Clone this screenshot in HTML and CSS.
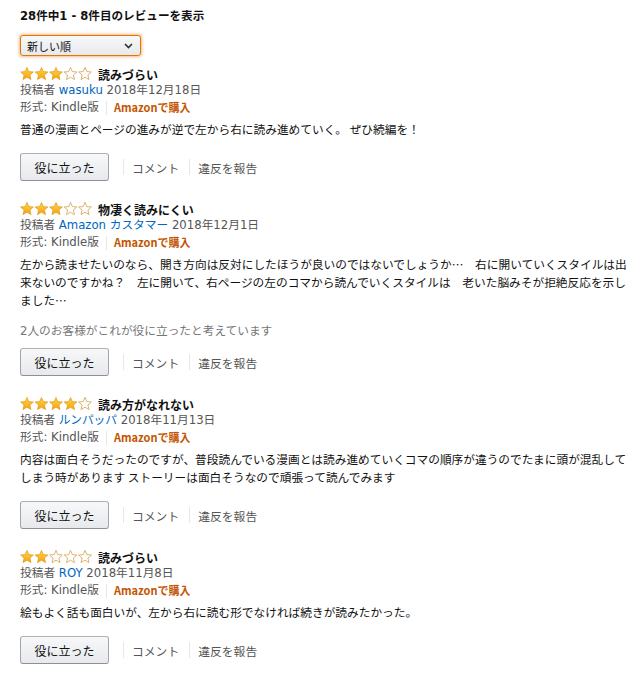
FILE: index.html
```html
<!DOCTYPE html>
<html lang="ja">
<head>
<meta charset="utf-8">
<title>レビュー</title>
<link rel="stylesheet" href="styles.css">
</head>
<body>
<svg width="0" height="0" class="defs">
  <defs>
    <linearGradient id="gold" x1="0" y1="0" x2="0" y2="1">
      <stop offset="0" stop-color="#ffd54a"/>
      <stop offset="1" stop-color="#f7a20c"/>
    </linearGradient>
    <path id="star" d="M7 0.4 L8.8 4.6 L13.4 5 L9.9 8 L11 12.6 L7 10.2 L3 12.6 L4.1 8 L0.6 5 L5.2 4.6 Z"/>
  </defs>
</svg>
<div class="page">
  <h2 class="count">28件中1 - 8件目のレビューを表示</h2>
  <div class="select">
    <span>新しい順</span>
    <svg class="chev" width="9" height="6" viewBox="0 0 9 6"><path d="M1 1 L4.5 4.5 L8 1" fill="none" stroke="#333" stroke-width="1.7"/></svg>
  </div>

  <div class="review">
    <div class="head">
      <svg class="stars" width="73" height="14" viewBox="0 0 73 14">
        <use href="#star" x="0" class="on"/><use href="#star" x="14.5" class="on"/><use href="#star" x="29" class="on"/><use href="#star" x="43.5" class="off"/><use href="#star" x="58" class="off"/>
      </svg>
      <span class="rtitle">読みづらい</span>
    </div>
    <div class="meta">投稿者 <a class="author">wasuku</a> 2018年12月18日</div>
    <div class="meta">形式: Kindle版<span class="sep"></span><span class="buy">Amazonで購入</span></div>
    <p class="text">普通の漫画とページの進みが逆で左から右に読み進めていく。 ぜひ続編を！</p>
    <div class="actions"><button class="btn">役に立った</button><span class="sep tall"></span><span class="act">コメント</span><span class="sep tall"></span><span class="act">違反を報告</span></div>
  </div>

  <div class="review">
    <div class="head">
      <svg class="stars" width="73" height="14" viewBox="0 0 73 14">
        <use href="#star" x="0" class="on"/><use href="#star" x="14.5" class="on"/><use href="#star" x="29" class="on"/><use href="#star" x="43.5" class="off"/><use href="#star" x="58" class="off"/>
      </svg>
      <span class="rtitle">物凄く読みにくい</span>
    </div>
    <div class="meta">投稿者 <a class="author">Amazon カスタマー</a> 2018年12月1日</div>
    <div class="meta">形式: Kindle版<span class="sep"></span><span class="buy">Amazonで購入</span></div>
    <p class="text">左から読ませたいのなら、開き方向は反対にしたほうが良いのではないでしょうか…　右に開いていくスタイルは出来ないのですかね？　左に開いて、右ページの左のコマから読んでいくスタイルは　老いた脳みそが拒絶反応を示しました…</p>
    <p class="helpful">2人のお客様がこれが役に立ったと考えています</p>
    <div class="actions close"><button class="btn">役に立った</button><span class="sep tall"></span><span class="act">コメント</span><span class="sep tall"></span><span class="act">違反を報告</span></div>
  </div>

  <div class="review">
    <div class="head">
      <svg class="stars" width="73" height="14" viewBox="0 0 73 14">
        <use href="#star" x="0" class="on"/><use href="#star" x="14.5" class="on"/><use href="#star" x="29" class="on"/><use href="#star" x="43.5" class="on"/><use href="#star" x="58" class="off"/>
      </svg>
      <span class="rtitle">読み方がなれない</span>
    </div>
    <div class="meta">投稿者 <a class="author">ルンパッパ</a> 2018年11月13日</div>
    <div class="meta">形式: Kindle版<span class="sep"></span><span class="buy">Amazonで購入</span></div>
    <p class="text">内容は面白そうだったのですが、普段読んでいる漫画とは読み進めていくコマの順序が違うのでたまに頭が混乱してしまう時があります ストーリーは面白そうなので頑張って読んでみます</p>
    <div class="actions"><button class="btn">役に立った</button><span class="sep tall"></span><span class="act">コメント</span><span class="sep tall"></span><span class="act">違反を報告</span></div>
  </div>

  <div class="review">
    <div class="head">
      <svg class="stars" width="73" height="14" viewBox="0 0 73 14">
        <use href="#star" x="0" class="on"/><use href="#star" x="14.5" class="on"/><use href="#star" x="29" class="off"/><use href="#star" x="43.5" class="off"/><use href="#star" x="58" class="off"/>
      </svg>
      <span class="rtitle">読みづらい</span>
    </div>
    <div class="meta">投稿者 <a class="author">ROY</a> 2018年11月8日</div>
    <div class="meta">形式: Kindle版<span class="sep"></span><span class="buy">Amazonで購入</span></div>
    <p class="text">絵もよく話も面白いが、左から右に読む形でなければ続きが読みたかった。</p>
    <div class="actions"><button class="btn">役に立った</button><span class="sep tall"></span><span class="act">コメント</span><span class="sep tall"></span><span class="act">違反を報告</span></div>
  </div>
</div>
</body>
</html>
```

FILE: styles.css
```css
html, body {
  margin: 0;
  padding: 0;
  background: #fff;
}
body {
  font-family: "DejaVu Sans", "Noto Sans CJK JP", sans-serif;
  font-size: 11.7px;
  color: #111;
}
.defs {
  position: absolute;
  width: 0;
  height: 0;
}
.page {
  padding: 7px 12px 0 20px;
}
.count {
  margin: 0;
  font-size: 11.6px;
  font-weight: bold;
  line-height: 18px;
  color: #111;
}
.select {
  margin-top: 10px;
  height: 19px;
  box-sizing: content-box;
  border: 1px solid #e77600;
  border-radius: 3px;
  box-shadow: 0 0 3px 1px rgba(228, 121, 17, 0.5);
  background: linear-gradient(#f7f8fa, #e7e9ec);
  display: flex;
  align-items: center;
  justify-content: space-between;
  padding: 0 7px 0 6px;
  width: 106px;
  font-family: "Noto Sans CJK JP", sans-serif;
  font-size: 11px;
  color: #111;
}
.review {
  margin-top: 10px;
  margin-bottom: 20px;
}
.review + .review {
  margin-top: 0;
}
.head {
  display: flex;
  align-items: center;
  height: 16px;
}
.stars {
  display: block;
  margin-right: 5px;
}
.on {
  fill: url(#gold);
  stroke: #dd9a1a;
  stroke-width: 0.7;
}
.off {
  fill: #fff;
  stroke: #d2a24e;
  stroke-width: 0.8;
}
.rtitle {
  font-family: "Noto Sans CJK JP", sans-serif;
  font-weight: bold;
  font-size: 12px;
  color: #111;
}
.meta {
  display: flex;
  align-items: center;
  height: 17px;
  line-height: 17px;
  color: #555;
  white-space: pre;
}
.author {
  color: #0066c0;
}
.sep {
  display: inline-block;
  width: 1px;
  height: 14px;
  background: #e7e7e7;
  margin: 0 7px;
}
.buy {
  font-family: "Noto Sans CJK JP", sans-serif;
  color: #c45500;
  font-weight: bold;
  font-size: 11px;
}
.text {
  margin: 4px 0 0;
  font-family: "Noto Sans CJK JP", sans-serif;
  line-height: 18px;
  color: #111;
}
.helpful {
  margin: 13px 0 0;
  line-height: 18px;
  color: #767676;
}
.actions {
  display: flex;
  align-items: center;
  margin-top: 15px;
}
.actions.close {
  margin-top: 8px;
}
.btn {
  width: 89px;
  height: 28px;
  border: 1px solid #adb1b8;
  border-color: #adb1b8 #a2a6ac #8d9096;
  border-radius: 3px;
  background: linear-gradient(#f7f8fa, #e7e9ec);
  font-family: "Noto Sans CJK JP", sans-serif;
  font-size: 12px;
  color: #111;
  padding: 0;
  margin-right: 14px;
}
.sep.tall {
  height: 16px;
  margin: 0 8px 0 0;
}
.act + .sep.tall {
  margin-left: 10px;
}
.act {
  font-family: "Noto Sans CJK JP", sans-serif;
  color: #555;
  font-size: 11.8px;
}
```
